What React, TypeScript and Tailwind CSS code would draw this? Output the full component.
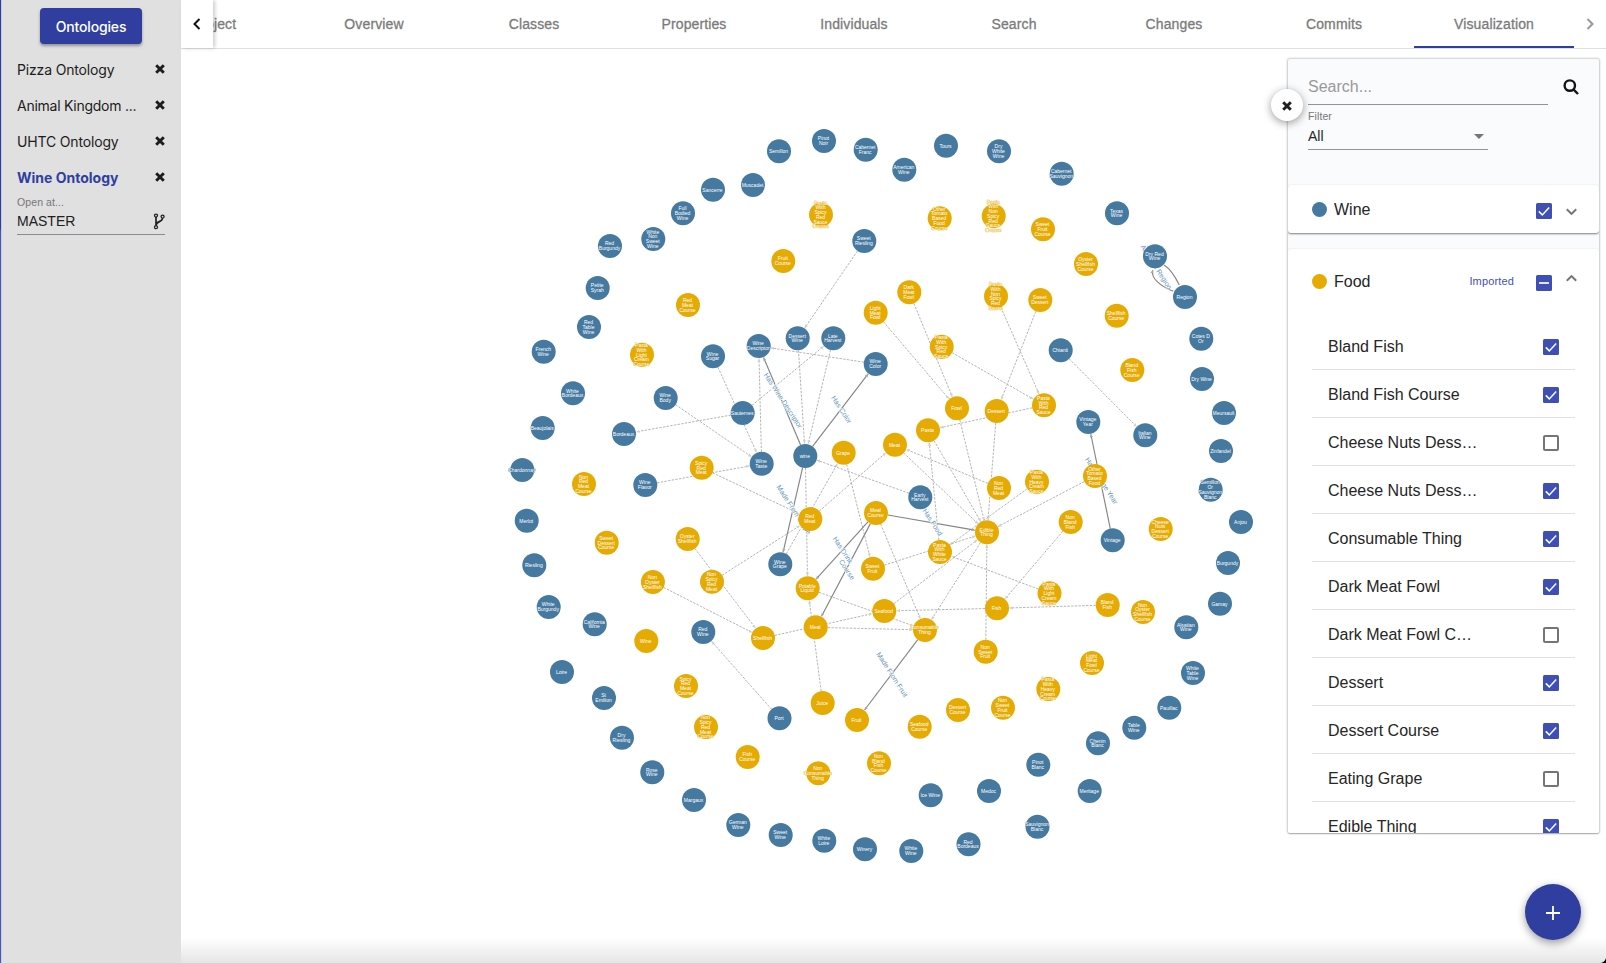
import React from "react";

const BLUE = "#45799f";
const GOLD = "#e6ab02";

type NodeTuple = [string, number, number];

// A slash marks a line break inside a node label.
const wineNodes: NodeTuple[] = [
  ["Muscadet", 753, 185], ["Sancerre", 713, 189.7], ["Full/Bodied/Wine", 683, 213.3],
  ["White/Non/Sweet/Wine", 653.3, 239], ["Red/Burgundy", 610, 246], ["Petite/Syrah", 597.7, 288],
  ["Red/Table/Wine", 589, 327], ["French/Wine", 543.7, 351.7], ["Wine/Sugar", 713, 356.3],
  ["Wine/Descriptor", 758.7, 346], ["Semillon", 779, 151.3], ["Pinot/Noir", 824, 141],
  ["Cabernet/Franc", 865.7, 149.7], ["American/Wine", 904.3, 169.7], ["Tours", 946, 145.7],
  ["Dry/White/Wine", 999, 151.3], ["Sweet/Riesling", 864.3, 241], ["Dessert/Wine", 797.7, 338.3],
  ["Late/Harvest", 833.3, 338.3], ["Wine/Color", 875.7, 364], ["Cabernet/Sauvignon", 1061.7, 173.7],
  ["Texas/Wine", 1117, 213.3], ["Dry Red/Wine", 1155, 256.3], ["Region", 1185, 297],
  ["Cotes D/Or", 1201.3, 338.7], ["Chianti", 1060.7, 350.3], ["Dry Wine", 1202, 379],
  ["White/Bordeaux", 573, 393.3], ["Beaujolais", 542.7, 428], ["Wine/Body", 665.7, 398],
  ["Bordeaux", 624, 434], ["Sauternes", 742.7, 413], ["Chardonnay", 522.3, 470],
  ["Wine/Taste", 761.7, 463.7], ["Wine/Flavor", 645.3, 485], ["Merlot", 526.7, 520.7],
  ["Riesling", 534.3, 565.3], ["White/Burgundy", 548.7, 607], ["wine", 805.3, 456],
  ["Early/Harvest", 920.3, 497.3], ["Wine/Grape", 780.3, 564.3], ["Vintage/Year", 1088.3, 422],
  ["Italian/Wine", 1145.3, 435.3], ["Meursault", 1224, 413], ["Zinfandel", 1221, 451],
  ["Semillon/Or/Sauvignon/Blanc", 1210.7, 489.7], ["Anjou", 1241, 522], ["Vintage", 1112.7, 540.3],
  ["Burgundy", 1228, 563], ["Gamay", 1220, 603.7], ["California/Wine", 594.7, 624.3],
  ["Red/Wine", 703.3, 632], ["Loire", 562, 672], ["St/Emilion", 604, 698],
  ["Dry/Riesling", 622, 737.7], ["Rose/Wine", 652.3, 772.3], ["Margaux", 694, 800],
  ["German/Wine", 738.3, 825], ["Port", 779.5, 718.3], ["Ice Wine", 930.7, 795.3],
  ["Medoc", 989, 791], ["Sweet/Wine", 780.7, 835], ["White/Loire", 824.3, 840.7],
  ["Winery", 865, 849.3], ["White/Wine", 911.3, 851], ["Red/Bordeaux", 968.5, 844.3],
  ["Alsatian/Wine", 1186.3, 627.3], ["White/Table/Wine", 1193, 673], ["Pauillac", 1169.3, 707.7],
  ["Table/Wine", 1134.3, 727.7], ["Chenin/Blanc", 1098, 743.3], ["Pinot/Blanc", 1038.3, 764.7],
  ["Meritage", 1089.7, 791], ["Sauvignon/Blanc", 1037.5, 826.7],
];

const foodNodes: NodeTuple[] = [
  ["Red/Meat/Course", 688, 305], ["Pasta/With/Light/Cream/Course", 642, 354.7],
  ["Pasta/With/Spicy/Red/Sauce/Course", 821, 214.7], ["Other/Tomato/Based/Food/Course", 939.7, 218.3],
  ["Pasta/With/Non/Spicy/Red/Sauce/Course", 993.7, 216], ["Fruit/Course", 783.3, 261],
  ["Dark/Meat/Fowl", 909.3, 292.3], ["Light/Meat/Fowl", 875.7, 312.7],
  ["Pasta/With/Non/Spicy/Red/Sauce", 996, 296.3], ["Pasta/With/Spicy/Red/Sauce", 941.7, 346.7],
  ["Sweet/Fruit/Course", 1043, 229.3], ["Oyster/Shellfish/Course", 1086, 264],
  ["Sweet/Dessert", 1040.3, 300], ["Shellfish/Course", 1116.7, 315.7],
  ["Bland/Fish/Course", 1132.3, 370], ["Spicy/Red/Meat", 701.7, 467.7],
  ["Non/Red/Meat/Course", 584, 484], ["Sweet/Dessert/Course", 606.7, 542.7],
  ["Oyster/Shellfish", 687.7, 539], ["Non/Oyster/Shellfish", 652.9, 582],
  ["Non/Spicy/Red/Meat", 712, 581.7], ["Fowl", 957, 408.3], ["Dessert", 996.7, 411],
  ["Pasta", 928, 430.3], ["Meat", 895, 444.7], ["Grape", 843.7, 452.7],
  ["Non/Red/Meat", 999, 488], ["Red/Meat", 810.3, 519], ["Meal/Course", 876, 513],
  ["Edible/Thing", 987, 532.3], ["Pasta/With/White/Sauce", 940, 552], ["Sweet/Fruit", 873, 568.7],
  ["Potable/Liquid", 807.7, 588.3], ["Seafood", 884.3, 611], ["Fish", 997, 608.3],
  ["Pasta/With/Red/Sauce", 1044, 405.3], ["Pasta/With/Heavy/Cream/Sauce", 1037, 481.7],
  ["Other/Tomato/Based/Food", 1095, 476], ["Non/Bland/Fish", 1070.7, 522],
  ["Cheese/Nuts/Dessert/Course", 1160.7, 529], ["Pasta/With/Light/Cream/Sauce", 1049.5, 593.3],
  ["Bland/Fish", 1107.7, 605], ["Non/Oyster/Shellfish/Course", 1143, 612], ["Wine", 646.3, 641],
  ["Shellfish", 763, 638], ["Spicy/Red/Meat/Course", 686, 686],
  ["Non/Spicy/Red/Meat/Course", 706, 727], ["Fish/Course", 747.7, 757], ["Meal", 815.7, 627.3],
  ["Consumable/Thing", 925, 630], ["Non/Sweet/Fruit", 985.7, 651.7], ["Juice", 822.7, 703],
  ["Fruit", 857, 720], ["Seafood/Course", 919.7, 726.7], ["Dessert/Course", 958, 710],
  ["Non/Sweet/Fruit/Course", 1003, 707.7], ["Non/Consumable/Thing", 818.3, 773.3],
  ["Non/Bland/Fish/Course", 879, 763.3], ["Light/Meat/Fowl/Course", 1092, 663],
  ["Pasta/With/Heavy/Cream/Course", 1048.3, 689],
];

const subclassEdges: [string, string][] = [
  ["Sweet/Riesling", "Dessert/Wine"], ["Dessert/Wine", "wine"], ["Late/Harvest", "wine"],
  ["Sauternes", "Late/Harvest"], ["Wine/Color", "Wine/Descriptor"], ["Wine/Sugar", "Wine/Taste"],
  ["Wine/Body", "Wine/Taste"], ["Sauternes", "Bordeaux"], ["Wine/Taste", "Wine/Descriptor"],
  ["Wine/Flavor", "Wine/Taste"], ["Spicy/Red/Meat", "Red/Meat"], ["Non/Spicy/Red/Meat", "Red/Meat"],
  ["Oyster/Shellfish", "Shellfish"], ["Non/Oyster/Shellfish", "Shellfish"], ["Wine/Grape", "Grape"],
  ["Grape", "Sweet/Fruit"], ["Early/Harvest", "wine"], ["wine", "Potable/Liquid"],
  ["Juice", "Potable/Liquid"], ["Red/Meat", "Meat"], ["Non/Red/Meat", "Meat"],
  ["Meat", "Edible/Thing"], ["Pasta", "Edible/Thing"], ["Fowl", "Edible/Thing"],
  ["Dessert", "Edible/Thing"], ["Light/Meat/Fowl", "Fowl"], ["Dark/Meat/Fowl", "Fowl"],
  ["Pasta/With/Spicy/Red/Sauce", "Pasta/With/Red/Sauce"],
  ["Pasta/With/Non/Spicy/Red/Sauce", "Pasta/With/Red/Sauce"], ["Sweet/Dessert", "Dessert"],
  ["Pasta/With/Red/Sauce", "Pasta"], ["Pasta/With/White/Sauce", "Pasta"],
  ["Pasta/With/Heavy/Cream/Sauce", "Pasta/With/White/Sauce"],
  ["Pasta/With/Light/Cream/Sauce", "Pasta/With/White/Sauce"],
  ["Other/Tomato/Based/Food", "Edible/Thing"], ["Sweet/Fruit", "Edible/Thing"],
  ["Seafood", "Edible/Thing"], ["Edible/Thing", "Consumable/Thing"],
  ["Non/Sweet/Fruit", "Edible/Thing"], ["Fish", "Seafood"], ["Bland/Fish", "Fish"],
  ["Non/Bland/Fish", "Fish"], ["Potable/Liquid", "Consumable/Thing"], ["Shellfish", "Seafood"],
  ["Meal", "Consumable/Thing"], ["Meal/Course", "Consumable/Thing"], ["Port", "Red/Wine"],
  ["Chianti", "Italian/Wine"],
];

const propertyEdges: [string, string, string][] = [
  ["wine", "Wine/Descriptor", "Has Wine Descriptor"],
  ["wine", "Wine/Color", "Has Color"],
  ["wine", "Wine/Grape", "Made From Grape"],
  ["Meal/Course", "Edible/Thing", "Has Food"],
  ["Meal/Course", "Potable/Liquid", "Has Drink"],
  ["Meal/Course", "Meal", "Course"],
  ["Consumable/Thing", "Fruit", "Made From Fruit"],
  ["Vintage", "Vintage/Year", "Has Vintage Year"],
];

const positions: Record<string, [number, number]> = {};
[...wineNodes, ...foodNodes].forEach(([name, x, y]) => {
  positions[name] = [x, y];
});

function trim(from: string, to: string) {
  const [x1, y1] = positions[from];
  const [x2, y2] = positions[to];
  const d = Math.hypot(x2 - x1, y2 - y1);
  const ux = (x2 - x1) / d;
  const uy = (y2 - y1) / d;
  return { x1: x1 + ux * 12, y1: y1 + uy * 12, x2: x2 - ux * 12.5, y2: y2 - uy * 12.5 };
}

function GraphNode({ node, color }: { node: NodeTuple; color: string }) {
  const [name, x, y] = node;
  const lines = name.split("/");
  return (
    <g>
      <circle cx={x} cy={y} r={12} fill={color} />
      <text
        textAnchor="middle"
        fontSize={5}
        fill="#fff"
        stroke={color}
        strokeWidth={0.5}
        style={{ paintOrder: "stroke" }}
      >
        {lines.map((line, i) => (
          <tspan key={i} x={x - 0.5} y={y + 1.8 + (i - (lines.length - 1) / 2) * 4.75}>
            {line}
          </tspan>
        ))}
      </text>
    </g>
  );
}

function EdgeLabel({ x, y, text }: { x: number; y: number; text: string }) {
  return (
    <text
      transform={`translate(${x} ${y}) rotate(57)`}
      y={1.6}
      textAnchor="middle"
      fontSize={7}
      fill="#6796b9"
      stroke="#fff"
      strokeWidth={1}
      style={{ paintOrder: "stroke" }}
    >
      {text}
    </text>
  );
}

function Graph() {
  return (
    <svg className="block h-full w-full" viewBox="181 49 1425 914" fontFamily="'Liberation Sans', Arial, sans-serif">
      <defs>
        <marker id="dashHead" viewBox="0 0 6 6" refX="5" refY="3" markerWidth="4" markerHeight="4" markerUnits="userSpaceOnUse" orient="auto">
          <path d="M0 0.6L5.5 3L0 5.4z" fill="#d0d0d0" />
        </marker>
        <marker id="solidHead" viewBox="0 0 6 6" refX="5" refY="3" markerWidth="4" markerHeight="4" markerUnits="userSpaceOnUse" orient="auto">
          <path d="M0 0.6L5.5 3L0 5.4z" fill="#aaa" />
        </marker>
      </defs>
      <g stroke="#b0b0b0" strokeWidth={0.95} strokeDasharray="2.4 1.3">
        {subclassEdges.map(([a, b]) => (
          <line key={a + b} {...trim(a, b)} markerEnd="url(#dashHead)" />
        ))}
      </g>
      <g stroke="#858585" strokeWidth={1.15} fill="none">
        {propertyEdges.map(([a, b]) => (
          <line key={a + b} {...trim(a, b)} markerEnd="url(#solidHead)" />
        ))}
        <path d="M1164 265Q1172 270 1179.3 285" />
        <path d="M1173.3 291.3C1160 286 1150.5 278 1152.8 270" markerEnd="url(#solidHead)" />
      </g>
      {propertyEdges.map(([a, b, text]) => (
        <EdgeLabel
          key={text}
          x={(positions[a][0] + positions[b][0]) / 2 + 0.4}
          y={(positions[a][1] + positions[b][1]) / 2}
          text={text}
        />
      ))}
      <EdgeLabel x={1155.5} y={267.5} text="Adjacent Region" />
      {wineNodes.map((n) => (
        <GraphNode key={n[0]} node={n} color={BLUE} />
      ))}
      {foodNodes.map((n) => (
        <GraphNode key={n[0]} node={n} color={GOLD} />
      ))}
    </svg>
  );
}

function TimesIcon({ className }: { className: string }) {
  return (
    <svg className={className} viewBox="0 0 10 10" fill="none" stroke="currentColor" strokeWidth={2.9}>
      <path d="M1.2 1.2L8.8 8.8M8.8 1.2L1.2 8.8" />
    </svg>
  );
}

function Checkbox({ state }: { state: "on" | "off" | "mixed" }) {
  if (state === "off") {
    return <span className="block size-4 shrink-0 rounded-[2px] border-2 border-[#757575]" />;
  }
  return (
    <svg className="block size-4 shrink-0" viewBox="0 0 16 16">
      <rect width="16" height="16" rx="1.5" fill="#3f4fb5" />
      {state === "on" ? (
        <path d="M2.8 8.4L6.3 11.9L13.2 4.6" fill="none" stroke="#fff" strokeWidth={1.5} />
      ) : (
        <path d="M3 8H13" stroke="#fff" strokeWidth={1.7} />
      )}
    </svg>
  );
}

function Sidebar() {
  return (
    <aside className="flex h-full w-[181px] shrink-0">
      <div className="w-px shrink-0 bg-[linear-gradient(#2f3d9f_228px,#4a58b5_232px)]" />
      <div className="flex flex-1 flex-col border-l border-[#c9cbdc] bg-[#e0e0e0] pr-4 pl-[15px] font-['Inter',sans-serif]">
        <button className="mt-2 mb-[7px] ml-[23px] h-9 w-[102px] rounded-[4px] bg-[#303f9f] text-[14px] font-medium text-white shadow-[0_2px_3px_rgba(0,0,0,0.35)]">
          <span className="tracking-[-0.15px]">Ontologies</span>
        </button>
        <div className="flex h-9 items-center justify-between text-[14px] tracking-[-0.16px] whitespace-nowrap text-[#1c1c1c]">
          <span>Pizza Ontology</span>
          <TimesIcon className="size-[10px]" />
        </div>
        <div className="flex h-9 items-center justify-between text-[14px] tracking-[-0.26px] whitespace-nowrap text-[#1c1c1c]">
          <span>Animal Kingdom ...</span>
          <TimesIcon className="size-[10px]" />
        </div>
        <div className="flex h-9 items-center justify-between text-[14px] tracking-[-0.16px] whitespace-nowrap text-[#1c1c1c]">
          <span>UHTC Ontology</span>
          <TimesIcon className="size-[10px]" />
        </div>
        <div className="flex h-9 items-center justify-between text-[14px] font-bold whitespace-nowrap text-[#303f9f]">
          <span>Wine Ontology</span>
          <TimesIcon className="size-[10px] text-[#1c1c1c]" />
        </div>
        <div className="mt-[-1px] flex h-[41px] w-[148px] flex-col border-b border-[#8b8b8b] font-['Liberation_Sans',sans-serif] text-[#202020]">
          <span className="mt-[2px] text-[10.5px] leading-[12px] tracking-[0.1px] text-[#777]">Open at...</span>
          <div className="mt-[3px] flex items-center justify-between">
            <span className="text-[14px] leading-[20px]">MASTER</span>
            <svg className="h-[17px] w-[12px]" viewBox="0 0 12 17" fill="none" stroke="currentColor" strokeWidth={1.3}>
              <circle cx="3" cy="2.6" r="1.5" />
              <circle cx="3" cy="14.2" r="1.5" />
              <circle cx="9.6" cy="3.6" r="1.5" />
              <path strokeWidth={1.7} d="M3 4V12.7M9.4 5.2C9.4 9.2 3.4 8 3.2 12" />
            </svg>
          </div>
        </div>
      </div>
    </aside>
  );
}

const tabs = ["Project", "Overview", "Classes", "Properties", "Individuals", "Search", "Changes", "Commits", "Visualization"];

function TabBar() {
  return (
    <nav className="flex h-[49px] shrink-0 border-b border-[#e0e0e0] bg-white">
      <div className="z-10 flex w-8 shrink-0 items-center justify-center bg-white shadow-[2px_0_4px_rgba(0,0,0,0.2)]">
        <svg className="size-[14px]" viewBox="0 0 14 14" fill="none" stroke="#111" strokeWidth={2}>
          <path d="M9.5 2L4.5 7L9.5 12" />
        </svg>
      </div>
      <div className="flex flex-1 overflow-hidden">
        <div className="-ml-[79px] flex">
          {tabs.map((tab) => (
            <div
              key={tab}
              className={
                "flex w-40 items-center justify-center border-b-2 pt-[2px] font-['Liberation_Sans',sans-serif] text-[14px] tracking-[0.12px] text-[#7b7b7b] [-webkit-text-stroke:0.3px_#7b7b7b] " +
                (tab === "Visualization" ? "border-[#303f9f]" : "border-transparent")
              }
            >
              {tab}
            </div>
          ))}
        </div>
      </div>
      <div className="flex w-8 shrink-0 items-center justify-center">
        <svg className="size-[14px]" viewBox="0 0 14 14" fill="none" stroke="#999" strokeWidth={2}>
          <path d="M4.5 2L9.5 7L4.5 12" />
        </svg>
      </div>
    </nav>
  );
}

const foodRows: [string, boolean][] = [
  ["Bland Fish", true],
  ["Bland Fish Course", true],
  ["Cheese Nuts Dess…", false],
  ["Cheese Nuts Dess…", true],
  ["Consumable Thing", true],
  ["Dark Meat Fowl", true],
  ["Dark Meat Fowl C…", false],
  ["Dessert", true],
  ["Dessert Course", true],
  ["Eating Grape", false],
  ["Edible Thing", true],
];

function FilterPanel() {
  return (
    <div className="absolute top-[10px] right-[7px] h-[774px] w-[311px]">
      <div className="flex h-full flex-col overflow-hidden rounded-[2px] bg-[#fafbfd] font-['Liberation_Sans',sans-serif] text-[#262626] shadow-[0_0_2px_1px_rgba(0,0,0,0.2),0_1px_1px_rgba(0,0,0,0.2)]">
        <div className="flex h-[46px] shrink-0 pl-5">
          <div className="flex w-60 border-b border-[#949494] pt-[16px] text-[16px] leading-6 text-[#999]">Search...</div>
          <svg className="mt-[20px] ml-[15px] size-[16px]" viewBox="0 0 16 16" fill="none" stroke="#151515" strokeWidth={2.4}>
            <circle cx="6.8" cy="6.6" r="5.2" />
            <path d="M10.4 10.4L15 15" />
          </svg>
        </div>
        <div className="ml-5 flex h-[45px] w-[180px] shrink-0 flex-col border-b border-[#949494]">
          <span className="mt-[5px] text-[10.5px] leading-[13px] tracking-[0.1px] text-[#777]">Filter</span>
          <div className="mt-[3px] flex items-center justify-between pr-1 text-[14px] leading-5">
            <span>All</span>
            <svg className="h-[5px] w-[10px]" viewBox="0 0 10 5">
              <path d="M0 0H10L5 5z" fill="#757575" />
            </svg>
          </div>
        </div>
        <div className="mt-[35px] flex h-12 shrink-0 items-center rounded-[3px] bg-white pr-[22px] pl-6 shadow-[0_1px_2px_rgba(0,0,0,0.5)]">
          <span className="size-[15px] rounded-full bg-[#45799f]" />
          <span className="ml-[7px] flex-1 pt-[2px] text-[16px]">Wine</span>
          <div className="pt-[3px]">
            <Checkbox state="on" />
          </div>
          <svg className="mt-[6px] ml-[14px] h-[8px] w-[11px]" viewBox="0 0 11 8" fill="none" stroke="#757575" strokeWidth={2}>
            <path d="M0.8 1.2L5.5 5.9L10.2 1.2" />
          </svg>
        </div>
        <div className="mt-4 flex shrink-0 flex-col rounded-[3px] bg-white shadow-[0_0_2px_rgba(0,0,0,0.12)]">
          <div className="flex h-16 items-center pr-[22px] pl-6">
            <span className="size-[15px] rounded-full bg-[#e6ab02]" />
            <span className="ml-[7px] flex-1 pt-[2px] text-[16px]">Food</span>
            <span className="mr-[22px] text-[11px] tracking-[0.15px] text-[#3f51b5]">Imported</span>
            <div className="pt-[3px]">
              <Checkbox state="mixed" />
            </div>
            <svg className="mt-[-6px] ml-[14px] h-[8px] w-[11px]" viewBox="0 0 11 8" fill="none" stroke="#757575" strokeWidth={2}>
              <path d="M0.8 6.8L5.5 2.1L10.2 6.8" />
            </svg>
          </div>
          <div className="mt-[9px] mr-6 ml-6 flex flex-col">
            {foodRows.map(([label, on], i) => (
              <div key={i} className="flex h-12 items-center justify-between border-b border-[#e0e0e0] pt-[2px] pr-4 pl-4">
                <span className="text-[16px]">{label}</span>
                <Checkbox state={on ? "on" : "off"} />
              </div>
            ))}
          </div>
        </div>
      </div>
      <button className="absolute top-[30px] left-[-17px] flex size-8 items-center justify-center rounded-full bg-white text-[#202020] shadow-[0_2px_8px_rgba(0,0,0,0.4)]">
        <TimesIcon className="mt-[1px] size-[10px]" />
      </button>
    </div>
  );
}

export default function App() {
  return (
    <div className="relative flex h-[963px] w-[1606px] overflow-hidden bg-white">
      <Sidebar />
      <main className="flex min-w-0 flex-1 flex-col">
        <TabBar />
        <div className="relative min-h-0 flex-1">
          <Graph />
          <div className="absolute right-0 bottom-0 left-0 h-[26px] bg-linear-to-b from-transparent to-[rgba(0,0,0,0.1)]" />
          <FilterPanel />
          <button className="absolute right-[25px] bottom-[23px] flex size-14 items-center justify-center rounded-full bg-[#303f9f] shadow-[0_3px_8px_rgba(0,0,0,0.4)]">
            <svg className="mt-[2px] size-[14px]" viewBox="0 0 14 14" stroke="#fff" strokeWidth={1.8}>
              <path d="M7 0V14M0 7H14" />
            </svg>
          </button>
          <svg className="absolute right-0 bottom-0 size-[5px]" viewBox="0 0 5 5">
            <path d="M5 0V5H0Q4 4 5 0z" fill="#000" />
          </svg>
        </div>
      </main>
    </div>
  );
}
